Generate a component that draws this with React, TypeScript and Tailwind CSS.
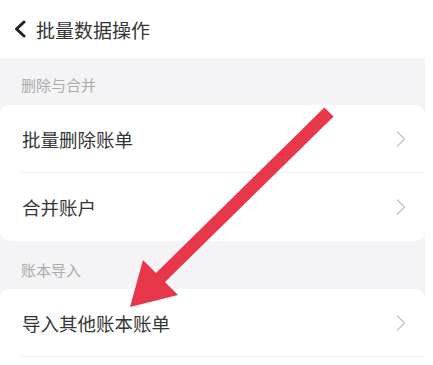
const font = { fontFamily: '"Noto Sans CJK SC", "Noto Sans", sans-serif' };

function Chevron() {
  return (
    <svg width="10" height="16" viewBox="0 0 10 16" className="shrink-0">
      <polyline points="1.5,1 8.5,8 1.5,15" fill="none" stroke="#c5c5c8" strokeWidth="1.4" strokeLinecap="round" strokeLinejoin="round" />
    </svg>
  );
}

function Row({ label, divider }: { label: string; divider?: boolean }) {
  return (
    <div className="relative flex h-[68px] items-center justify-between pl-[22px] pr-[19px]">
      <span className="text-[18.5px] leading-none text-[#363636]">{label}</span>
      <Chevron />
      {divider && <div className="absolute bottom-0 left-[21px] right-0 h-px bg-[#efeff1]" />}
    </div>
  );
}

export default function App() {
  return (
    <div className="relative h-[365px] w-[433px] overflow-hidden bg-white" style={font}>
      <div className="flex h-[58px] items-center pl-[13px]">
        <svg width="14" height="18" viewBox="0 0 14 18" className="shrink-0">
          <polyline points="11,2 3.5,9 11,16" fill="none" stroke="#222222" strokeWidth="3" strokeLinecap="round" strokeLinejoin="round" />
        </svg>
        <span className="ml-[9px] text-[19px] leading-none text-[#333333]">批量数据操作</span>
      </div>

      <div className="w-[425px] bg-[#f4f4f6]">
        <div className="h-[47px] pl-[21px] pt-[19px] text-[15px] leading-[15px] text-[#ababab]">删除与合并</div>
        <div className="rounded-[10px] bg-white">
          <Row label="批量删除账单" divider />
          <Row label="合并账户" />
        </div>
        <div className="h-[48px] pl-[21px] pt-[21px] text-[15px] leading-[15px] text-[#ababab]">账本导入</div>
        <div className="rounded-t-[10px] bg-white">
          <Row label="导入其他账本账单" divider />
          <div className="h-[68px]" />
        </div>
      </div>

      {/* annotation arrow */}
      <svg className="pointer-events-none absolute inset-0" width="433" height="365" viewBox="0 0 433 365">
        <polygon
          points="324.4,107.4 333.6,116.6 165,282 178,295 130,307 143,260 156,273"
          fill="#e8364b"
        />
      </svg>
    </div>
  );
}
